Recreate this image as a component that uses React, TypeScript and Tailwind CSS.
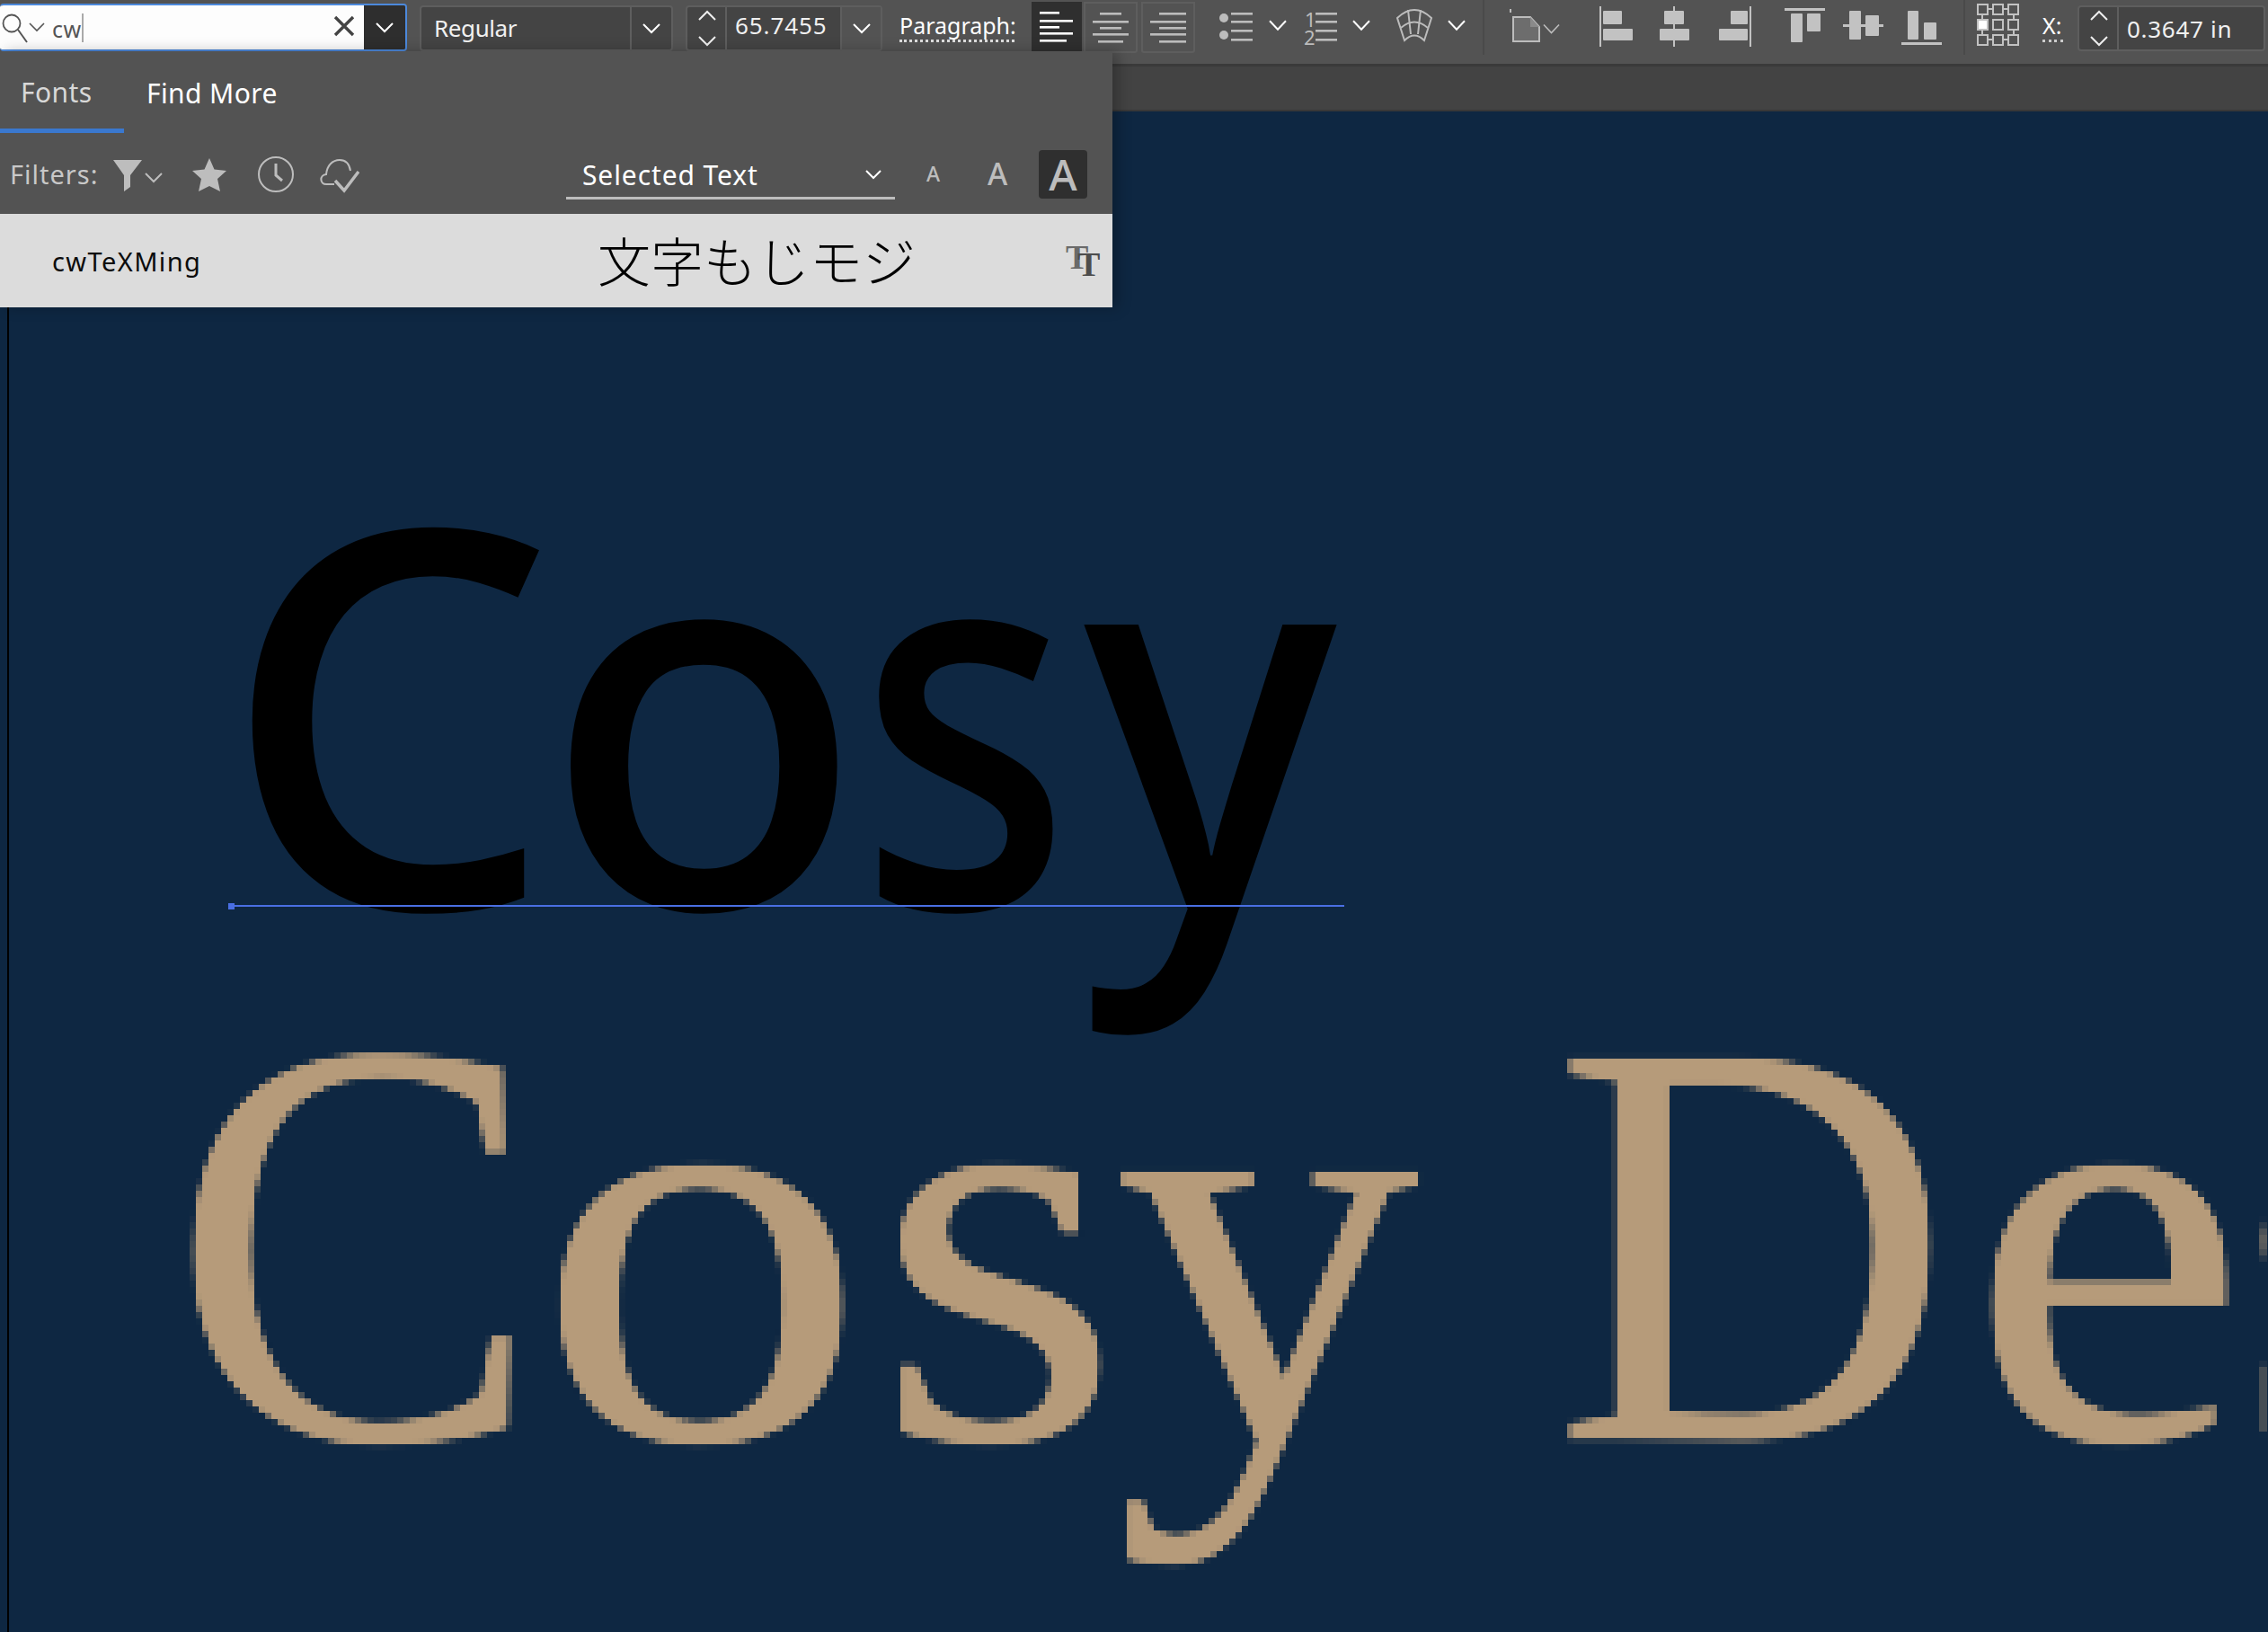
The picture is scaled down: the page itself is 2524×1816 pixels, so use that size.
import React from "react";

const ui = "font-['Noto_Sans','Open_Sans',sans-serif]";

function Chev({ y = 28, w = 20, color = "#fff", sw = 2, className = "" }: { y?: number; w?: number; color?: string; sw?: number; className?: string }) {
  const h = w * 0.47;
  return (
    <svg width={w} height={61} viewBox={`0 0 ${w} 61`} className={`block shrink-0 ${className}`}>
      <polyline points={`1,${y - h / 2} ${w / 2},${y + h / 2} ${w - 1},${y - h / 2}`} fill="none" stroke={color} strokeWidth={sw} />
    </svg>
  );
}

function Stepper() {
  return (
    <svg width={44} height={51} viewBox="0 0 44 51" className="block shrink-0">
      <polyline points="13,16 22,7 31,16" fill="none" stroke="#eee" strokeWidth="2" />
      <polyline points="13,35 22,44 31,35" fill="none" stroke="#eee" strokeWidth="2" />
    </svg>
  );
}

function Lines({ w, lines, color }: { w: number; lines: [number, number, number][]; color: string }) {
  return (
    <svg width={w} height={55} viewBox={`0 0 ${w} 55`} className="block">
      {lines.map(([x, y, l], i) => (
        <rect key={i} x={x} y={y} width={l} height={2.6} fill={color} />
      ))}
    </svg>
  );
}

function Toolbar() {
  const g = "#bcbcbc";
  return (
    <div className="flex h-[71px] items-start bg-[#535353]">
      <div className="mt-[4px] flex h-[53px] w-[453px] shrink-0 overflow-hidden rounded-[4px] border-2 border-l-0 border-[#4c89dc]">
        <div className="flex h-full w-[405px] items-center bg-[#fdfdfd]">
          <svg width={30} height={40} viewBox="0 0 30 40" className="ml-[2px] block shrink-0">
            <circle cx="11" cy="15" r="9.5" fill="none" stroke="#555" strokeWidth="1.8" />
            <line x1="18" y1="22" x2="28" y2="36" stroke="#555" strokeWidth="2" />
          </svg>
          <svg width={18} height={40} viewBox="0 0 18 40" className="block shrink-0">
            <polyline points="1,15 9,23 17,15" fill="none" stroke="#555" strokeWidth="1.6" />
          </svg>
          <span className={`ml-[8px] mt-[3px] text-[25px] leading-none tracking-[0.5px] text-[#555] ${ui}`}>cw</span>
          <span className="h-[32px] w-[2px] bg-[#aaa]" />
          <svg width={24} height={24} viewBox="0 0 24 24" className="ml-[278px] mt-[-3px] block shrink-0">
            <path d="M2 2 L22 22 M22 2 L2 22" stroke="#444" strokeWidth="3.4" />
          </svg>
        </div>
        <div className="flex h-full flex-1 items-center justify-center bg-[#2e2e2e]">
          <svg width={20} height={12} viewBox="0 0 20 12"><polyline points="1,1 10,10 19,1" fill="none" stroke="#fff" strokeWidth="2" /></svg>
        </div>
      </div>

      <div className="ml-[14px] mt-[6px] flex h-[51px] w-[282px] shrink-0 items-center rounded-[4px] border-2 border-[#5e5e5e] bg-[#444444]">
        <span className={`ml-[14px] mt-[-2px] w-[218px] text-[26px] leading-none tracking-[-0.4px] text-[#f0f0f0] ${ui}`}>Regular</span>
        <div className="flex h-full flex-1 items-center justify-center border-l-2 border-[#5e5e5e]">
          <svg width={20} height={12} viewBox="0 0 20 12"><polyline points="1,1 10,10 19,1" fill="none" stroke="#fff" strokeWidth="2" /></svg>
        </div>
      </div>

      <div className="ml-[14px] mt-[6px] flex h-[51px] w-[219px] shrink-0 items-center rounded-[4px] border-2 border-[#5e5e5e] bg-[#444444]">
        <div className="flex h-full w-[44px] items-center border-r-2 border-[#5e5e5e]"><Stepper /></div>
        <span className={`ml-[9px] mt-[-7px] w-[117px] text-[26px] leading-none tracking-[0.9px] text-[#f0f0f0] ${ui}`}>65.7455</span>
        <div className="flex h-full flex-1 items-center justify-center border-l-2 border-[#5e5e5e] bg-[#535353]">
          <svg width={20} height={12} viewBox="0 0 20 12"><polyline points="1,1 10,10 19,1" fill="none" stroke="#fff" strokeWidth="2" /></svg>
        </div>
      </div>

      <div className="ml-[19px] mt-[13px] w-[128px] shrink-0 border-b-[3px] border-dotted border-[#ddd] pb-[1px]">
        <div className={`whitespace-nowrap text-[25px] leading-[30px] text-white ${ui}`}>Paragraph:</div>
      </div>

      <div className="ml-[19px] mt-[2px] flex h-[57px] w-[182px] shrink-0">
        <div className="flex h-[55px] w-[56px] items-center justify-center bg-[#2f2f2f]">
          <Lines w={40} color="#fff" lines={[[1, 11, 22], [1, 20, 37], [1, 27, 22], [1, 34, 37], [1, 42, 30]]} />
        </div>
        <div className="ml-[2px] flex h-[57px] w-[60px] items-center justify-center rounded-b-[3px] border-2 border-[#5e5e5e]">
          <Lines w={40} color={g} lines={[[8, 11, 24], [0, 20, 40], [8, 27, 24], [0, 34, 40], [6, 42, 28]]} />
        </div>
        <div className="ml-[4px] flex h-[57px] w-[60px] items-center justify-center rounded-b-[3px] border-2 border-[#5e5e5e]">
          <Lines w={40} color={g} lines={[[10, 11, 30], [0, 20, 40], [10, 27, 30], [0, 34, 40], [10, 42, 30]]} />
        </div>
      </div>

      <svg width={38} height={61} viewBox="0 0 38 61" className="ml-[27px] block shrink-0">
        <circle cx="5" cy="20" r="5" fill={g} /><circle cx="5" cy="39" r="5" fill={g} />
        <rect x="13" y="14" width="24" height="2.6" fill={g} /><rect x="13" y="23" width="24" height="2.6" fill={g} />
        <rect x="13" y="33" width="24" height="2.6" fill={g} /><rect x="13" y="43" width="24" height="2.6" fill={g} />
      </svg>
      <Chev className="ml-[17px]" />
      <div className="relative ml-[20px] h-[61px] w-[36px] shrink-0">
        <span className={`absolute left-[0px] top-[10px] text-[22px] leading-[22px] text-[#bcbcbc] ${ui}`}>1</span>
        <span className={`absolute left-[-1px] top-[30px] text-[22px] leading-[22px] text-[#bcbcbc] ${ui}`}>2</span>
        <svg width={36} height={61} viewBox="0 0 36 61" className="block">
          <rect x="12" y="14" width="24" height="2.6" fill={g} /><rect x="12" y="23" width="24" height="2.6" fill={g} />
          <rect x="12" y="33" width="24" height="2.6" fill={g} /><rect x="12" y="43" width="24" height="2.6" fill={g} />
        </svg>
      </div>
      <Chev className="ml-[17px]" />
      <svg width={40} height={61} viewBox="0 0 40 61" className="ml-[29px] block shrink-0" fill="none" stroke={g} strokeWidth="2">
        <path d="M1 20 Q20 2 39 20 L31 45 Q20 34 9 45 Z" />
        <path d="M13 11 L16 38 M27 11 L24 38" />
        <path d="M5 31 Q20 18 35 31" />
      </svg>
      <Chev className="ml-[17px]" />
      <div className="ml-[19px] h-[61px] w-[2px] shrink-0 bg-[#4a4a4a]" />

      <svg width={34} height={61} viewBox="0 0 34 61" className="ml-[28px] block shrink-0">
        <path d="M4 19 H23 L33 30 V46 H4 Z" fill="#6d6d6d" stroke={g} strokeWidth="2" />
        <path d="M23 19 V30 H33" fill="#8a8a8a" stroke="none" />
        <rect x="0" y="10" width="2" height="4" fill={g} />
      </svg>
      <Chev className="ml-[3px]" w={19} y={32} color={g} sw={1.6} />

      <svg width={38} height={61} viewBox="0 0 38 61" className="ml-[44px] block shrink-0" fill="#c2c2c2">
        <rect x="0" y="7" width="2" height="45" /><rect x="4" y="12" width="21" height="15" rx="1" /><rect x="4" y="32" width="33" height="13" rx="1" />
      </svg>
      <svg width={33} height={61} viewBox="0 0 33 61" className="ml-[29px] block shrink-0" fill="#c2c2c2">
        <rect x="15" y="7" width="2" height="45" /><rect x="5" y="12" width="22" height="15" rx="1" /><rect x="0" y="32" width="33" height="13" rx="1" />
      </svg>
      <svg width={36} height={61} viewBox="0 0 36 61" className="ml-[33px] block shrink-0" fill="#c2c2c2">
        <rect x="34" y="7" width="2" height="45" /><rect x="13" y="12" width="19" height="15" rx="1" /><rect x="0" y="32" width="32" height="13" rx="1" />
      </svg>
      <svg width={45} height={61} viewBox="0 0 45 61" className="ml-[37px] block shrink-0" fill="#c2c2c2">
        <rect x="0" y="9" width="45" height="3" /><rect x="7" y="15" width="13" height="32" rx="1" /><rect x="25" y="15" width="15" height="20" rx="1" />
      </svg>
      <svg width={45} height={61} viewBox="0 0 45 61" className="ml-[20px] block shrink-0" fill="#c2c2c2">
        <rect x="0" y="27" width="45" height="3" /><rect x="7" y="12" width="13" height="32" rx="1" /><rect x="25" y="17" width="15" height="23" rx="1" />
      </svg>
      <svg width={45} height={61} viewBox="0 0 45 61" className="ml-[20px] block shrink-0" fill="#c2c2c2">
        <rect x="0" y="47" width="45" height="3" /><rect x="7" y="12" width="12" height="32" rx="1" /><rect x="25" y="25" width="14" height="19" rx="1" />
      </svg>
      <div className="ml-[24px] h-[61px] w-[2px] shrink-0 bg-[#4a4a4a]" />

      <svg width={48} height={61} viewBox="0 0 48 61" className="ml-[13px] block shrink-0" fill="none" stroke="#c2c2c2" strokeWidth="2">
        {[1, 18, 35].map((x) =>
          [5, 22, 39].map((y) => <rect key={`${x}-${y}`} x={x} y={y} width="11" height="11" fill={x === 1 && y === 22 ? "#fff" : "none"} />)
        )}
        <path d="M12 10 H18 M29 10 H35 M12 44 H18 M29 44 H35 M6 16 V22 M6 33 V39 M41 16 V22 M41 33 V39" />
      </svg>

      <div className="ml-[25px] mt-[12px] w-[23px] shrink-0 border-b-[3px] border-dotted border-[#ccc]">
        <div className={`text-[25px] leading-[32px] text-white ${ui}`}>X:</div>
      </div>

      <div className="ml-[16px] mt-[6px] flex h-[51px] w-[209px] shrink-0 items-center rounded-[4px] border-2 border-[#5e5e5e] bg-[#444444]">
        <div className="flex h-full w-[44px] items-center border-r-2 border-[#5e5e5e]"><Stepper /></div>
        <span className={`ml-[9px] whitespace-nowrap text-[26px] leading-none tracking-[0.7px] text-[#f0f0f0] ${ui}`}>0.3647 in</span>
      </div>
    </div>
  );
}

function FontPanel() {
  return (
    <div className={`absolute left-0 top-[57px] z-10 w-[1238px] shadow-[6px_0_14px_rgba(0,0,0,0.25)] ${ui}`}>
      <div className="h-[181px] bg-[#535353]">
        <div className="flex h-[91px] items-start">
          <div className="flex h-[91px] w-[138px] items-center border-b-[5px] border-[#3a78cf] pl-[23px]">
            <span className="mt-[5px] text-[30px] leading-none tracking-[0.4px] text-[#d8d8d8]">Fonts</span>
          </div>
          <span className="ml-[25px] mt-[32px] text-[30px] leading-none tracking-[0.4px] text-white">Find More</span>
        </div>
        <div className="flex h-[90px] items-start">
          <span className="ml-[11px] mt-[31px] w-[100px] text-[29px] leading-none tracking-[1px] text-[#c8c8c8]">Filters:</span>
          <svg width={34} height={40} viewBox="0 0 34 40" className="ml-[14px] mt-[28px] block shrink-0">
            <path d="M1 2 H33 L20 19 V32 L13 37 V19 Z" fill="#bdbdbd" />
          </svg>
          <svg width={20} height={12} viewBox="0 0 20 12" className="ml-[2px] mt-[44px] block shrink-0">
            <polyline points="1,1 10,10 19,1" fill="none" stroke="#bdbdbd" strokeWidth="2" />
          </svg>
          <svg width={38} height={38} viewBox="0 0 38 38" className="ml-[33px] mt-[28px] block shrink-0">
            <path d="M19 0 L24.5 12.5 L38 14 L28 23 L31 37 L19 31 L7 37 L10 23 L0 14 L13.5 12.5 Z" fill="#bdbdbd" strokeLinejoin="round" />
          </svg>
          <svg width={40} height={40} viewBox="0 0 40 40" className="ml-[35px] mt-[26px] block shrink-0" fill="none" stroke="#bdbdbd">
            <circle cx="20" cy="20" r="19" strokeWidth="2" />
            <path d="M20 8 V21 L27 27" strokeWidth="3" />
          </svg>
          <svg width={44} height={38} viewBox="0 0 44 38" className="ml-[29px] mt-[29px] block shrink-0" fill="none" stroke="#bdbdbd" strokeWidth="2">
            <path d="M16 28 H7 C0 28 -1 18 7 17 C8 7 14 1 22 1 C30 1 33 7 34 13" />
            <path d="M17 24 L27 35 L43 14" strokeWidth="3.5" />
          </svg>
          <div className="ml-[230px] mt-[22px] flex h-[52px] w-[366px] shrink-0 items-center border-b-[3px] border-[#bdbdbd]">
            <span className="ml-[18px] w-[315px] text-[30px] leading-none tracking-[0.9px] text-white">Selected Text</span>
            <svg width={18} height={11} viewBox="0 0 18 11" className="block shrink-0">
              <polyline points="1,1 9,9 17,1" fill="none" stroke="#fff" strokeWidth="2" />
            </svg>
          </div>
          <div className="flex h-[90px] w-[103px] shrink-0 items-center pl-[35px]">
            <span className="mt-[1px] text-[23px] font-medium leading-none text-[#bdbdbd]">A</span>
          </div>
          <span className="mt-[28px] w-[57px] text-[34px] font-medium leading-none text-[#bdbdbd]">A</span>
          <div className="mt-[19px] flex h-[54px] w-[54px] shrink-0 items-center justify-center rounded-[4px] bg-[#2f2f2f]">
            <span className="text-[48px] font-medium leading-none text-[#bdbdbd]">A</span>
          </div>
        </div>
      </div>
      <div className="flex h-[104px] items-center bg-[#dcdcdc]">
        <span className="ml-[58px] w-[607px] text-[29px] leading-none tracking-[1.4px] text-[#0c0c0c]">cwTeXMing</span>
        <span className="mt-[-4px] w-[521px] font-['Noto_Sans_CJK_JP',sans-serif] text-[59px] font-extralight leading-none text-black">文字もじモジ</span>
        <div className="relative h-[34px] w-[40px] shrink-0">
          <span className="absolute left-[0px] top-[-9px] font-['Liberation_Serif',serif] text-[38px] font-bold leading-[44px] text-[#6a6a6a]">T</span>
          <span className="absolute left-[13px] top-[-1px] font-['Liberation_Serif',serif] text-[38px] font-bold leading-[44px] text-[#4d4d4d]">T</span>
        </div>
      </div>
    </div>
  );
}

function Canvas() {
  return (
    <div className="relative h-[1692px] overflow-hidden bg-[#0e2742]">
      <div className="absolute bottom-0 left-[8px] top-0 w-[2px] bg-black" />
      <div className="absolute left-[246px] top-[367px] whitespace-nowrap font-['Noto_Sans','Open_Sans',sans-serif] text-[586px] font-medium leading-none tracking-[-14px] text-black">
        Co
        <span className="ml-[6px] inline-block origin-left scale-x-[0.84]">s</span>
        <span className="ml-[-19px] inline-block origin-left scale-x-[0.91]">y</span>
      </div>
      <div className="absolute left-[257px] top-[883px] h-[2px] w-[1239px] bg-[#4a6fe3]" />
      <div className="absolute left-[254px] top-[881px] h-[7px] w-[7px] bg-[#4a6fe3]" />
      <div className="absolute left-[191px] top-[936px] h-[756px] w-[2333px] overflow-hidden whitespace-nowrap font-['Liberation_Serif',serif] text-[646px] leading-none tracking-[14px] text-[#b69b7a] [filter:url(#pix)]">
        <span className="inline-block origin-left scale-x-[0.95]">C</span>
        <span className="ml-[-40px] inline-block origin-left scale-x-[1.14]">o</span>
        <span className="ml-[41px] inline-block origin-left scale-x-[1.09]">s</span>
        <span className="ml-[2px] inline-block origin-left scale-x-[1.05]">y</span>{" "}
        <span className="ml-[-24px] inline-block origin-left scale-x-[0.945]">D</span>
        <span className="ml-[-19px] inline-block origin-left scale-x-[1.08]">e</span>
        <span>sign</span>
      </div>
    </div>
  );
}

export default function App() {
  return (
    <div className="relative h-[1816px] w-[2524px] overflow-hidden bg-[#0e2742]">
      <svg width="0" height="0" className="absolute">
        <filter id="pix" x="0" y="0" width="100%" height="100%" primitiveUnits="userSpaceOnUse" colorInterpolationFilters="sRGB">
          <feGaussianBlur in="SourceGraphic" stdDeviation="1.6" result="b" />
          <feFlood x="3" y="3" width="1" height="1" floodColor="#000" />
          <feComposite width="7" height="7" />
          <feTile result="t" />
          <feComposite in="b" in2="t" operator="in" />
          <feMorphology operator="dilate" radius="3.5" />
        </filter>
      </svg>
      <Toolbar />
      <div className="h-[53px] border-b-2 border-t-[3px] border-b-[#383838] border-t-[#3a3a3a] bg-[#434343]" />
      <Canvas />
      <FontPanel />
    </div>
  );
}
